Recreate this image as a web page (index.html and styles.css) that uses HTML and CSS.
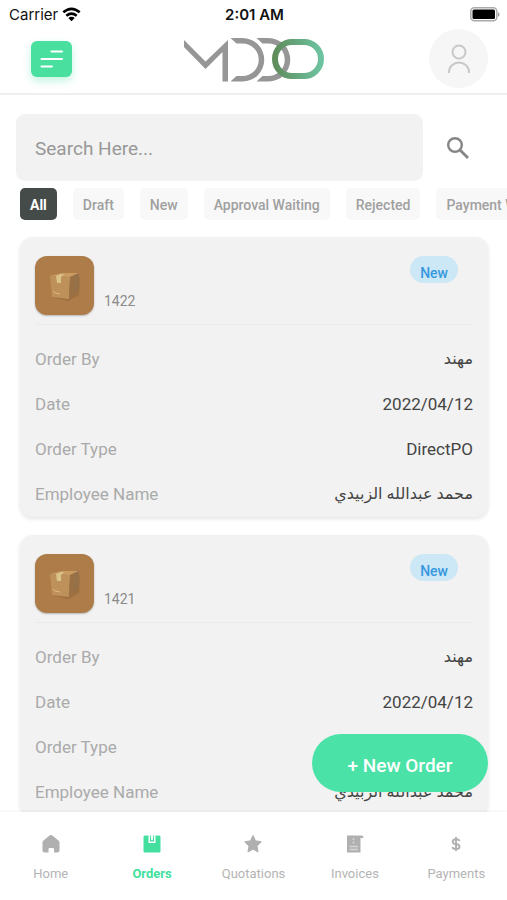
FILE: index.html
```html
<!DOCTYPE html>
<html lang="en">
<head>
<meta charset="utf-8">
<meta name="viewport" content="width=device-width, initial-scale=1">
<title>Orders</title>
<link rel="stylesheet" href="styles.css">
</head>
<body>
<svg class="defs" aria-hidden="true">
  <defs>
    <linearGradient id="ring" x1="0" x2="1"><stop offset="0" stop-color="#5f8d5c"/><stop offset="1" stop-color="#6cc3a0"/></linearGradient>
    <linearGradient id="side" x1="0" x2="1"><stop offset="0" stop-color="#9a7142"/><stop offset="1" stop-color="#94704a"/></linearGradient>
    <symbol id="parcel" viewBox="0 0 59 59">
      <path d="M17 41l16 4 11-6 1-18z" fill="#94683a" opacity=".6"/>
      <path d="M15 20l12-3 17 0-9 4z" fill="#c89c63"/>
      <path d="M15 20l20 1-1 22-17-2z" fill="#bd9159"/>
      <path d="M35 21l9-4v17l-10 9z" fill="url(#side)"/>
      <path d="M21 20l5-2 3 0-3 3v6h-4z" fill="#dac388"/>
      <path d="M18 35l2 2 5 1" fill="none" stroke="#dcba80"/>
    </symbol>
  </defs>
</svg>
<div class="screen">
  <div class="status">
    <span class="carrier">Carrier
      <svg width="19" height="15" viewBox="0 0 19 15"><g fill="none" stroke="#000" stroke-width="2.6"><path d="M1.3 5.3q8.200-7 16.400 0"/><path d="M4.300 8.700q5.200-4.300 10.400 0"/></g><path d="M6.300 11q3.200-2.600 6.400 0l-3.200 3.200z"/></svg>
    </span>
    <span class="time">2:01 AM</span>
    <svg class="battery" width="30" height="15" viewBox="0 0 30 15"><rect x=".8" y=".8" width="26" height="13" rx="3.500" fill="#fff" stroke="#aaa" stroke-width="1.500"/><rect x="2.500" y="2.500" width="22.500" height="9.600" rx="1.500"/><path d="M28 5q3 2.400 0 5z" fill="#999"/></svg>
  </div>
  <header class="header">
    <button class="menu" aria-label="Menu"><svg width="41" height="36" viewBox="0 0 41 36"><path d="M20.500 10.500H31M10.500 18H31M10.500 25.500H21" stroke="#fff" stroke-width="2" stroke-linecap="round"/></svg></button>
    <svg class="logo" width="142" height="46" viewBox="0 -2 142 46" role="img" aria-label="MDDO">
      <g fill="#969696">
        <path d="M1 2L22.500 23.500 45 2V43.500H39.500V14L22.500 31 1 9z"/>
        <path d="M47.500 0H59.500a21.700 21.700 0 0 1 0 43.500H47.500l6-5.500H59.500a16.200 16.200 0 0 0 0-32.500H53.500z"/>
        <path d="M73.500 0H85.500a21.700 21.700 0 0 1 0 43.500H73.500l6-5.500H85.500a16.200 16.200 0 0 0 0-32.500H79.500z"/>
      </g>
      <rect x="92" y="4" width="46" height="34" rx="17" fill="none" stroke="url(#ring)" stroke-width="6"/>
    </svg>
    <button class="avatar" aria-label="Profile"><svg width="24" height="32" viewBox="0 0 24 32"><g fill="none" stroke="#c8c8c8" stroke-width="2"><circle cx="12" cy="9" r="6.500"/><path d="M2 30v-1a10 9.500 0 0 1 20 0v1"/></g></svg></button>
  </header>
  <main class="main">
    <form class="search">
      <input type="text" aria-label="Search" placeholder="Search Here...">
      <button type="button" aria-label="Search"><svg width="24" height="24" viewBox="0 0 24 24"><circle cx="9" cy="9" r="6.800" fill="none" stroke="#868686" stroke-width="2.400"/><path d="M14 14l8 8" stroke="#868686" stroke-width="2.800"/></svg></button>
    </form>
    <div class="chips">
      <button class="chip chip-on">All</button><button class="chip">Draft</button><button class="chip">New</button><button class="chip">Approval Waiting</button><button class="chip">Rejected</button><button class="chip">Payment Waiting</button>
    </div>
    <article class="card">
      <div class="card-top"><svg class="thumb" role="img" aria-label="Parcel"><use href="#parcel"/></svg><span class="number">1422</span><span class="badge">New</span></div>
      <dl>
        <div><dt>Order By</dt><dd lang="ar" dir="rtl">مهند</dd></div>
        <div><dt>Date</dt><dd>2022/04/12</dd></div>
        <div><dt>Order Type</dt><dd>DirectPO</dd></div>
        <div><dt>Employee Name</dt><dd lang="ar" dir="rtl">محمد عبدالله الزبيدي</dd></div>
      </dl>
    </article>
    <article class="card">
      <div class="card-top"><svg class="thumb" role="img" aria-label="Parcel"><use href="#parcel"/></svg><span class="number">1421</span><span class="badge">New</span></div>
      <dl>
        <div><dt>Order By</dt><dd lang="ar" dir="rtl">مهند</dd></div>
        <div><dt>Date</dt><dd>2022/04/12</dd></div>
        <div><dt>Order Type</dt><dd>DirectPO</dd></div>
        <div><dt>Employee Name</dt><dd lang="ar" dir="rtl">محمد عبدالله الزبيدي</dd></div>
      </dl>
    </article>
    <button class="new-order">+ New Order</button>
  </main>
  <nav class="tabs">
    <a href="#home"><svg viewBox="0 0 18 18"><path d="M9 0q1 0 2 1l5.500 4.500q1 1 1 2V15.500q0 2-2 2H12v-3.500a1 1 0 0 0-1-1H7.500a1 1 0 0 0-1 1v3.500H2.500q-2 0-2-2V7.500q0-1 1-2L7 1q1-1 2-1z"/></svg>Home</a>
    <a href="#orders" class="active"><svg viewBox="0 0 18 18"><path d="M2 .5H5.500V8H12.500V.5H16q1.500 0 1.500 1.500V16q0 1.500-1.500 1.500H2Q.5 17.500.5 16V2Q.5.5 2 .5z"/><path d="M7 .5H8V5.500l1-1 1 1V.5h1V6.500H7z"/></svg>Orders</a>
    <a href="#quotations"><svg viewBox="0 0 18 18"><path d="M9 .8l2.400 5.100 5.600.9-4.100 4 1 5.800L9 13.900l-4.900 2.700 1-5.800L1 6.800l5.600-.9z" stroke="#b0b0b0" stroke-width="1.200" stroke-linejoin="round"/></svg>Quotations</a>
    <a href="#invoices"><svg viewBox="0 0 18 18"><path d="M1 .5H16q1.500 0 1.500 2.500H14.500V17.500H1z"/><path d="M7.500 3v2M7.500 6.500v2M3.500 11.500H12M3.500 14.500H12" fill="none" stroke="#d6d6d6" stroke-width="1.500"/></svg>Invoices</a>
    <a href="#payments"><svg viewBox="0 0 18 18"><path d="M12.500 6Q12 4.200 9 4.200T5.700 6.400 9 9t3.500 2.700T9 14 5.500 12M9 2v14" fill="none" stroke="#b0b0b0" stroke-width="1.900"/></svg>Payments</a>
  </nav>
</div>
</body>
</html>
```
FILE: styles.css
```css
* { box-sizing: border-box; }
body { margin: 0; background: #fff; font-family: Roboto, "DejaVu Sans", sans-serif; }
button, input { font: inherit; border: 0; padding: 0; margin: 0; background: none; }
svg { display: block; flex: none; }
.defs { position: absolute; width: 0; height: 0; }
.screen { display: flex; flex-direction: column; height: 100vh; overflow: hidden; }

.status { display: grid; grid-template-columns: 1fr auto 1fr; align-items: center; flex: none; height: 28px; padding: 0 7px 0 9px; font: 15px Inter, sans-serif; color: #111; }
.carrier { display: flex; align-items: center; gap: 4px; }
.time { font-weight: 600; }
.battery { justify-self: end; }

.header { display: flex; align-items: center; justify-content: space-between; flex: none; height: 67px; padding: 0 19px 4px 31px; border-bottom: 2px solid #efefef; }
.menu { border-radius: 6px; background: #48df9f; box-shadow: 0 4px 8px #48df9f55; }
.logo { margin-left: 7px; }
.avatar { display: grid; place-items: center; width: 59px; height: 59px; border-radius: 50%; background: #f6f6f6; }

.main { position: relative; flex: 1; min-height: 0; overflow: hidden; padding-top: 19px; }
.search { display: flex; align-items: center; gap: 23px; padding: 0 37px 0 16px; }
.search input { flex: 1; min-width: 0; height: 67px; padding: 2px 19px 0; border-radius: 9px; background: #f2f2f2; font-size: 19px; }
.search input::placeholder { color: #989898; opacity: 1; }
.chips { display: flex; gap: 16px; margin: 7px 0 17px; padding-left: 20px; overflow: hidden; }
.chip { flex: none; height: 32px; padding: 2px 10px 0; border-radius: 5px; background: #f8f8f8; color: #a0a0a0; font-size: 14px; font-weight: 500; }
.chip-on { background: #444b49; color: #fff; font-weight: 700; }

.card { margin: 0 19px 18px 20px; padding: 19px 15px 0; border-radius: 13px; background: #f2f2f2; box-shadow: 0 2px 4px #0000001c; }
.card-top { display: flex; align-items: flex-end; gap: 10px; padding-bottom: 9px; border-bottom: 1px solid #ebebeb; }
.thumb { width: 59px; height: 59px; border-radius: 12px; background: #ad7c48; box-shadow: 0 1px 2px #00000040; }
.number { margin-bottom: 5px; font-size: 14px; line-height: 18px; color: #8b8b8b; }
.badge { align-self: flex-start; margin: 0 15px 0 auto; padding: 7px 10px 0; height: 27px; border-radius: 14px; background: #cce7f5; color: #3598df; font-size: 14px; font-weight: 500; line-height: 20px; }
dl { margin: 0; padding: 11px 0 1px; }
dl div { display: flex; align-items: center; justify-content: space-between; height: 45px; }
dt { font-size: 17px; color: #aaa; }
dd { margin: 0; font-size: 17px; color: #444; }
dd[lang] { font-size: 16px; }

.new-order { position: absolute; right: 19px; bottom: 20px; width: 176px; height: 58px; padding-top: 4px; border-radius: 29px; background: #4ae2a7; color: #fff; font-size: 19px; font-weight: 500; }

.tabs { display: grid; grid-template-columns: repeat(5, 1fr); flex: none; height: 88px; padding-top: 23px; background: #fff; box-shadow: 0 -1px 2px #0000000d; z-index: 1; }
.tabs a { display: flex; flex-direction: column; align-items: center; gap: 12px; color: #b4b4b4; fill: #b0b0b0; text-decoration: none; font-size: 13px; line-height: 18px; }
.tabs svg { width: 18px; height: 18px; }
.tabs .active { color: #42df9e; fill: #42df9e; font-weight: 700; }
```
